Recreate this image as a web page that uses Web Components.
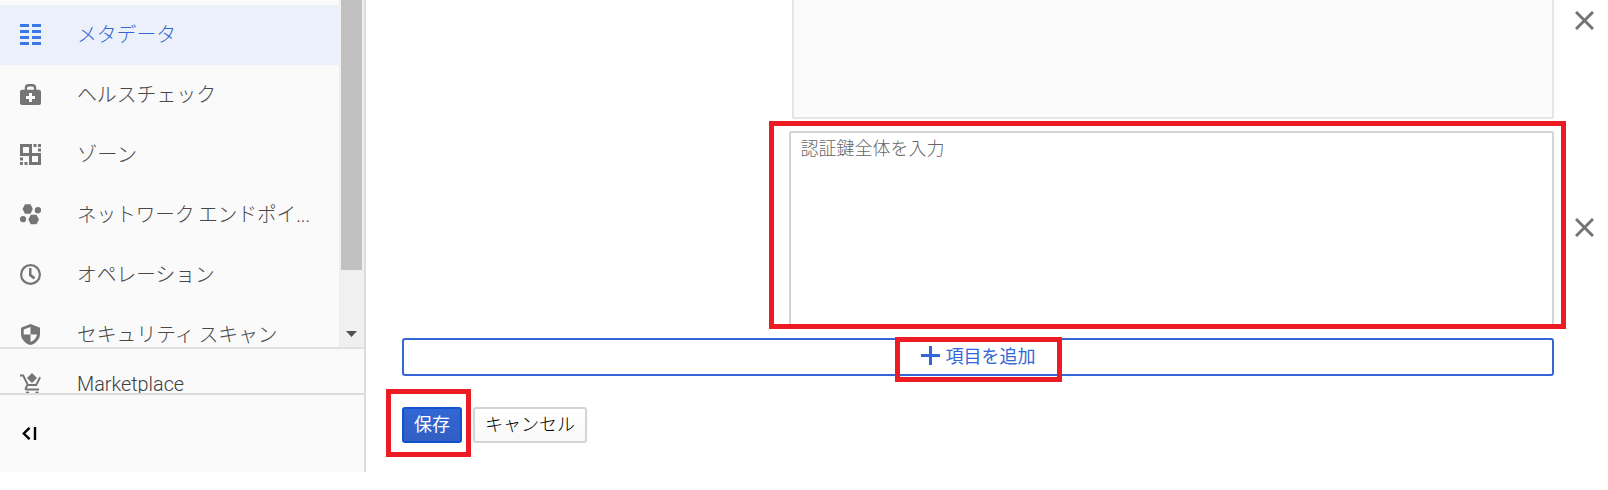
<!DOCTYPE html>
<html lang="ja">
<head>
<meta charset="utf-8">
<title>メタデータ</title>
<style>
body{margin:0;background:#fff;font-family:Roboto,"Noto Sans CJK JP",sans-serif;color:#505050;overflow:hidden}
</style>
</head>
<body>
<metadata-page></metadata-page>
<script>
const define=(name,html,init)=>{
  const t=document.createElement('template');t.innerHTML=html;
  customElements.define(name,class extends HTMLElement{
    constructor(){super();this.attachShadow({mode:'open'}).append(t.content.cloneNode(true));}
    connectedCallback(){if(init)init(this,this.shadowRoot);}
  });
};
const icons={
  meta:'<path d="M0 0h9v3H0zM12 0h9v3h-9zM0 6h9v3H0zM12 6h9v3h-9zM0 12h9v3H0zM12 12h9v3h-9zM0 18h9v3H0zM12 18h9v3h-9z"/>',
  health:'<path fill-rule="evenodd" d="M4.7 5.7V4Q4.7 0 8.7 0h3.6q4 0 4 4v1.7H19q2 0 2 2V19q0 2-2 2H2q-2 0-2-2V7.700q0-2 2-2zM7 5.700h7V4.400Q14 2.500 12.200 2.500H8.800Q7 2.500 7 4.400zM9 9v3H6v3h3v3h3v-3h3v-3h-3V9z"/>',
  zone:'<path fill-rule="evenodd" d="M0 0h12v9h9v12H9v-9H0zM3 3v6h6V3zM12 12v6h6v-6zM9 9v3h3V9z"/><path d="M9 9h3v3H9zM13.500 0h3v3h-3zM18 0h3v3h-3zM18 4.500h3v3h-3zM0 13.500h3v3H0zM0 18h3v3H0zM4.500 18h3v3h-3z"/>',
  network:'<path d="M5 .3h5.500l2.300 4.700-2.300 4.700H5L2.500 5zM10.800 10.800h5.700l2.500 4.700-2.500 4.700h-5.700L8.300 15.500z"/><circle cx="18" cy="6.200" r="3.200"/><circle cx="3" cy="15.200" r="3.100"/>',
  clock:'<circle cx="10.500" cy="10.500" r="9.400" fill="none" stroke="currentColor" stroke-width="2.200"/><path d="M9 4h2.500v6.300l3.800 2.900-1.600 2.300L9 11.700z"/>',
  shield:'<path fill-rule="evenodd" d="M10.500 0 20 3.700v6.200c0 5-4 9.600-9.500 11.100C5 19.500 1 14.900 1 9.900V3.700zM10.500 3 3.700 5.600v4.900h6.800zM10.500 10.500V18c3.600-1.300 6-4 6.500-7.500z"/>',
  cart:'<path d="m12 0 5 5-5 5-5-5z"/><path d="M0 2.500h3.200l4.700 9.600h8.200l4-7.800M7.500 12.100l-1.700 3q-.6 1.500 1 1.500H19" fill="none" stroke="currentColor" stroke-width="2"/><circle cx="7.500" cy="20.500" r="1.900"/><circle cx="17" cy="20.500" r="1.900"/>'
};
define('nav-item',`<style>
:host{display:flex;align-items:center;height:60px;padding:0 0 1px 20px;box-sizing:border-box;color:#757575}
:host([active]){background:#ebf0fa;color:#3b78e7}
svg{width:21px;height:21px;flex:none;display:block;fill:currentColor}
span{margin-left:36px;font-size:20px;font-weight:300;line-height:30px;white-space:nowrap;word-spacing:-1px;color:#484848;transform-origin:left;position:relative;top:0}
:host([active]) span{color:#3367d6}
:host([latin]) span{color:#404040}
</style><svg viewBox="0 0 21 21"></svg><span><slot></slot></span>`,(h,r)=>{
  r.querySelector('svg').innerHTML=icons[h.getAttribute('icon')];
  const s=r.querySelector('span'),w=+h.getAttribute('w');
  if(w)s.style.transform='scaleX('+w/s.offsetWidth+')';
});
define('nav-scrollbar',`<style>
:host{display:flex;flex-direction:column;justify-content:space-between;align-items:center;width:25px;height:347px;background:#f0f0f0}
i{width:21px;height:270px;background:#c1c1c1;margin-right:0}
svg{display:block;margin-bottom:10px}
</style><i></i><svg width="11" height="6"><path d="M0 0h11L5.500 6z" fill="#505050"/></svg>`);
define('side-nav',`<style>
:host{display:flex;flex-direction:column;width:366px;height:472px;box-sizing:border-box;border-right:2px solid #dcdcdc;background:#fafafa}
.top{display:flex;height:347px;border-bottom:2px solid #e0e0e0;overflow:hidden}
.list{flex:1;padding-top:5px}
.market{height:44px;overflow:hidden;border-bottom:2px solid #dcdcdc}
.market nav-item{margin-top:5px}
.foot{padding:32px 0 0 22px}
svg{display:block}
</style>
<div class="top"><div class="list">
<nav-item icon="meta" active w="99">メタデータ</nav-item>
<nav-item icon="health" w="139">ヘルスチェック</nav-item>
<nav-item icon="zone" w="60">ゾーン</nav-item>
<nav-item icon="network" w="233">ネットワーク エンドポイ...</nav-item>
<nav-item icon="clock" w="138">オペレーション</nav-item>
<nav-item icon="shield" w="201">セキュリティ スキャン</nav-item>
</div><nav-scrollbar></nav-scrollbar></div>
<div class="market"><nav-item icon="cart" latin w="107">Marketplace</nav-item></div>
<div class="foot"><svg width="15" height="13" fill="none" stroke="#000" stroke-width="2.400"><path d="M7.600.8 1.800 6.500l5.800 5.700M13 0v13"/></svg></div>`);
define('remove-icon',`<style>:host{display:block;width:19px;height:19px}svg{display:block}</style>
<svg width="19" height="19" stroke="#757575" stroke-width="3"><path d="m1 1 17 17M18 1 1 18"/></svg>`);
define('value-box',`<style>
:host{display:block;box-sizing:border-box;border:2px solid #d4d4d4;border-radius:2px;background:#fff;padding:3px 9.500px;color:#666;font-size:18px;font-weight:300;line-height:26px}
:host([disabled]){border-color:#e5e5e5;background:#fbfbfb}
</style><slot></slot>`);
define('ui-button',`<style>
:host{display:flex;align-items:center;justify-content:center;box-sizing:border-box;height:36px;border:2px solid #d4d4d4;border-radius:3px;background:linear-gradient(#fff,#f8f8f8);color:#000;font-size:18px;font-weight:400;white-space:nowrap}
:host([kind=primary]){background:linear-gradient(#3367d6,#315ec2);border-color:#1153ce;color:#fff}
:host([kind=add]){height:38px;background:#fff;border-color:#3367d6;color:#3367d6;gap:6px}
span{position:relative;top:-2px}
::slotted(svg){display:block;margin-top:-3px}
</style><slot name="icon"></slot><span><slot></slot></span>`);
define('mark-frame',`<style>:host{display:block;position:absolute;box-sizing:border-box;border:5px solid #ed1c24;pointer-events:none}</style>`);
define('metadata-page',`<style>
:host{display:flex;width:1608px;height:490px;position:relative}
main{flex:1;padding-left:36px}
.row{display:grid;grid-template-columns:1152px 19px;column-gap:21px}
.r1{height:131px}.r2{height:207px}
.r1 value-box{height:119px;margin-left:390px;border-top:0;border-radius:0 0 2px 2px}
.r2 value-box{height:196px;margin-left:387px}
.r1 remove-icon{margin-top:11px}.r2 remove-icon{margin-top:87px}
ui-button[kind=add]{width:1152px}
.actions{display:flex;gap:11px;margin-top:31px}
.save{width:60px}.cancel{width:114px;font-weight:300}
</style>
<side-nav></side-nav>
<main>
<div class="row r1"><value-box disabled></value-box><remove-icon></remove-icon></div>
<div class="row r2"><value-box>認証鍵全体を入力</value-box><remove-icon></remove-icon></div>
<ui-button kind="add"><svg slot="icon" width="19" height="19" stroke="#3367d6" stroke-width="3"><path d="M9.500 0v19M0 9.500h19"/></svg>項目を追加</ui-button>
<div class="actions"><ui-button kind="primary" class="save">保存</ui-button><ui-button class="cancel">キャンセル</ui-button></div>
</main>
<mark-frame style="left:769px;top:121px;width:797px;height:208px"></mark-frame>
<mark-frame style="left:895px;top:337px;width:167px;height:45px"></mark-frame>
<mark-frame style="left:386px;top:389px;width:85px;height:68px"></mark-frame>`);
</script>
</body>
</html>
